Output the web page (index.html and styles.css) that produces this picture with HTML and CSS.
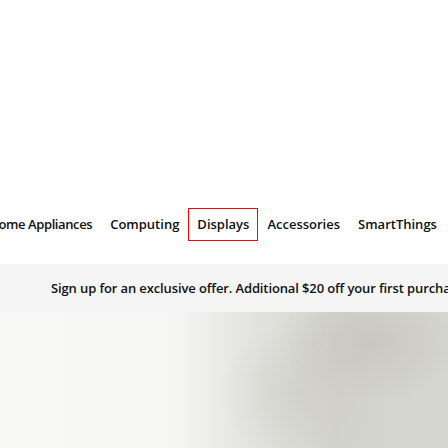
FILE: index.html
```html
<!DOCTYPE html>
<html lang="en">
<head>
<meta charset="utf-8">
<title>Shop</title>
<link rel="stylesheet" href="styles.css">
</head>
<body>
<div class="top">
  <nav class="tabs">
    <a class="tab">Home Appliances</a>
    <a class="tab">Computing</a>
    <a class="tab active">Displays</a>
    <a class="tab">Accessories</a>
    <a class="tab">SmartThings</a>
  </nav>
</div>
<div class="promo">
  <p class="promo-text">Sign up for an exclusive offer. Additional $20 off your first purchase.</p>
</div>
<div class="hero"></div>
</body>
</html>
```

FILE: styles.css
```css
* { box-sizing: border-box; }
html, body { margin: 0; padding: 0; }
body {
  width: 448px;
  height: 448px;
  overflow: hidden;
  background: #fff;
  font-family: "Open Sans", "Noto Sans", sans-serif;
  color: #111;
}
.top {
  height: 264px;
  padding-top: 208px;
  overflow: hidden;
}
.tabs {
  display: flex;
  justify-content: center;
  padding-right: 22px;
  white-space: nowrap;
}
.tab {
  flex: none;
  display: block;
  height: 33px;
  line-height: 31px;
  padding: 0 8px;
  border: 1px solid transparent;
  font-size: 13px;
  font-weight: 600;
  color: #111;
}
.tab.active { border-color: #f00; }
.tab:first-child { letter-spacing: -0.4px; }
.promo {
  height: 48px;
  background: #f5f5f5;
  display: flex;
  align-items: center;
  padding-left: 51px;
  overflow: hidden;
}
.promo-text {
  margin: 0;
  flex: none;
  white-space: nowrap;
  font-size: 13px;
  font-weight: 600;
  letter-spacing: -0.12px;
  color: #111;
}
.hero {
  height: 136px;
  background:
    radial-gradient(ellipse 90px 60px at 370px 30px, rgba(190,190,182,0.55), rgba(190,190,182,0) 100%),
    radial-gradient(ellipse 80px 70px at 300px 80px, rgba(200,200,192,0.45), rgba(200,200,192,0) 100%),
    linear-gradient(90deg, #f8f8f6 0%, #f6f6f4 38%, #e4e4e0 55%, #d3d3cd 75%, #d6d6d0 100%);
}
```
